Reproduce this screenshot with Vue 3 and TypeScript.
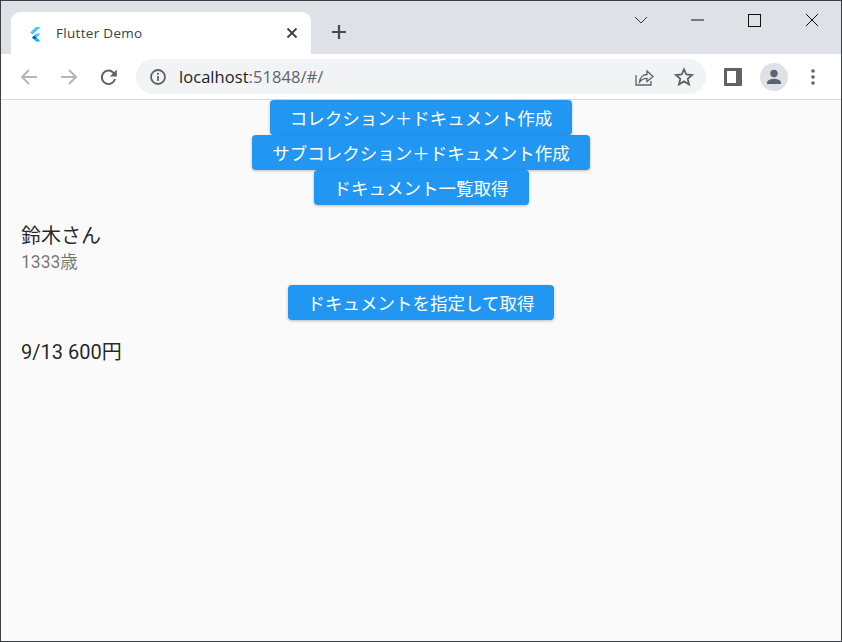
<script setup lang="ts">
const topButtons: string[] = [
  'コレクション＋ドキュメント作成',
  'サブコレクション＋ドキュメント作成',
  'ドキュメント一覧取得',
]
</script>

<template>
  <div class="window">
    <header class="tabstrip">
      <div class="tab">
        <svg class="flutter" width="13" height="16" viewBox="2 0 13 16">
          <path d="M9 1h4.600L5.500 8.600 3.200 6.400z" fill="#47c5fb" />
          <path d="M9 7.600h4.600L9.600 11.500 7.200 9.400z" fill="#47c5fb" />
          <path d="M7.200 9.400l2.400 2.100-2.300 2.200-2.300-2.200z" fill="#00569e" />
          <path d="M9.600 11.500l4 3.900H9l-1.700-1.700z" fill="#00b5f8" />
        </svg>
        <span class="tab-title">Flutter Demo</span>
        <svg class="tab-close" width="12" height="12" viewBox="0 0 12 12">
          <path d="M1.500 1.500l9 9M10.500 1.500l-9 9" stroke="#3c4043" stroke-width="1.800" />
        </svg>
      </div>
      <svg class="new-tab" width="16" height="16" viewBox="0 0 16 16">
        <path d="M8 1v14M1 8h14" stroke="#484b50" stroke-width="2.200" />
      </svg>
      <div class="win-controls">
        <svg width="14" height="8" viewBox="0 0 14 8"><path d="M1 1l6 6 6-6" fill="none" stroke="#333" /></svg>
        <svg class="ctl-min" width="13" height="2" viewBox="0 0 13 2"><path d="M0 1h13" stroke="#111" /></svg>
        <svg class="ctl-max" width="13" height="13" viewBox="0 0 13 13"><rect x="0.500" y="0.500" width="12" height="12" fill="none" stroke="#111" /></svg>
        <svg class="ctl-close" width="14" height="14" viewBox="0 0 14 14"><path d="M1 1l12 12M13 1L1 13" stroke="#111" /></svg>
      </div>
    </header>

    <nav class="toolbar">
      <svg class="nav-icon" width="20" height="20" viewBox="0 0 20 20"><path d="M18 10H3M10 3l-7 7 7 7" fill="none" stroke="#b4b6b8" stroke-width="2" /></svg>
      <svg class="nav-icon" width="20" height="20" viewBox="0 0 20 20"><path d="M2 10h15M10 3l7 7-7 7" fill="none" stroke="#b4b6b8" stroke-width="2" /></svg>
      <svg class="nav-icon" width="20" height="20" viewBox="0 0 20 20"><path d="M16 12a6.700 6.700 0 1 1-1.600-6.300L17 8" fill="none" stroke="#5f6368" stroke-width="2" /><path d="M17.800 2.500v7h-7z" fill="#5f6368" /></svg>
      <div class="omnibox">
        <svg width="16" height="16" viewBox="0 0 16 16"><circle cx="8" cy="8" r="7" fill="none" stroke="#5f6368" stroke-width="1.800" /><path d="M8 7v5" stroke="#5f6368" stroke-width="1.800" /><circle cx="8" cy="4.800" r="1.100" fill="#5f6368" /></svg>
        <div class="url"><span class="host">localhost</span>:51848/#/</div>
        <svg class="share" width="20" height="20" viewBox="0 0 20 20"><path d="M2 8v10h15v-4" fill="none" stroke="#5f6368" stroke-width="1.300" /><path d="M5.500 15c.5-5 4-7.500 7.500-7.500V4l6 5.500-6 5v-3.200c-3 0-5.500 1-7.500 3.700z" fill="none" stroke="#5f6368" stroke-width="1.300" /></svg>
        <svg class="star" width="20" height="20" viewBox="0 0 20 20"><path d="M10 2.300l2.300 5.200 5.700.5-4.300 3.800 1.300 5.600-5-3-5 3 1.300-5.600L2 8l5.700-.5z" fill="none" stroke="#5f6368" stroke-width="1.800" /></svg>
      </div>
      <svg class="panel" width="18" height="18" viewBox="0 0 18 18"><rect width="18" height="18" rx="1" fill="#5f6368" /><rect x="3" y="3" width="9" height="12" fill="#fff" /></svg>
      <div class="avatar">
        <svg width="18" height="18" viewBox="0 0 18 18"><circle cx="9" cy="5.500" r="3.700" fill="#5b6474" /><path d="M2 16v-1.500c0-2.500 4.500-3.800 7-3.800s7 1.300 7 3.800V16z" fill="#5b6474" /></svg>
      </div>
      <svg class="menu" width="4" height="16" viewBox="0 0 4 16"><circle cx="2" cy="2" r="1.800" fill="#5f6368" /><circle cx="2" cy="8" r="1.800" fill="#5f6368" /><circle cx="2" cy="14" r="1.800" fill="#5f6368" /></svg>
    </nav>

    <main class="page">
      <button v-for="label in topButtons" :key="label" class="action" type="button">{{ label }}</button>
      <div class="tile">
        <div class="tile-title">鈴木さん</div>
        <div class="tile-sub">1333歳</div>
      </div>
      <button class="action" type="button">ドキュメントを指定して取得</button>
      <div class="order">9/13 600円</div>
    </main>
  </div>
</template>

<style>
html, body { margin: 0; padding: 0; }
</style>

<style scoped>
.window {
  width: 842px;
  height: 642px;
  box-sizing: border-box;
  border: 1px solid #3c3f43;
  display: flex;
  flex-direction: column;
  overflow: hidden;
  background: #fafafa;
  font-family: Roboto, "Noto Sans CJK JP", sans-serif;
}
.tabstrip {
  height: 53px;
  flex: none;
  background: #dee1e6;
  display: flex;
  align-items: flex-start;
}
.tab {
  width: 300px;
  height: 42px;
  margin: 11px 0 0 10px;
  background: #fff;
  border-radius: 9px 9px 0 0;
  display: flex;
  align-items: center;
  padding: 0 13px 0 18px;
  box-sizing: border-box;
}
.flutter { flex: none; margin-top: 1px; }
.tab-title {
  margin-left: 14px;
  font-family: "Open Sans", Roboto, sans-serif;
  font-size: 13.500px;
  letter-spacing: 0.3px;
  color: #3c4043;
  flex: 1;
}
.tab-close { flex: none; margin: -1px 0 0 0; }
.new-tab { margin: 23px 0 0 20px; flex: none; }
.win-controls {
  margin-left: auto;
  display: flex;
  align-items: center;
  height: 38px;
  padding-right: 22px;
}
.ctl-min { margin-left: 43px; }
.ctl-max { margin-left: 44px; }
.ctl-close { margin-left: 44px; }
.toolbar {
  height: 46px;
  flex: none;
  box-sizing: border-box;
  background: #fff;
  border-bottom: 1px solid #d9dadc;
  display: flex;
  align-items: center;
  padding: 0 0 0 18px;
}
.nav-icon { flex: none; margin-right: 20px; }
.omnibox {
  width: 570px;
  height: 35px;
  margin-left: -3px;
  border-radius: 18px;
  background: #f1f3f4;
  display: flex;
  align-items: center;
  padding: 0 12px 0 14px;
  box-sizing: border-box;
}
.url {
  margin-left: 13px;
  font-size: 16.500px;
  font-family: "Open Sans", Roboto, sans-serif;
  letter-spacing: 0.05px;
  color: #5f6368;
  flex: 1;
}
.host { color: #202124; }
.star { margin-left: 20px; }
.panel { flex: none; margin-left: 18px; }
.avatar {
  width: 28px;
  height: 28px;
  margin-left: 18px;
  border-radius: 50%;
  background: #dee1e6;
  display: flex;
  align-items: center;
  justify-content: center;
  flex: none;
}
.menu { flex: none; margin-left: 23px; }
.page {
  flex: 1;
  display: flex;
  flex-direction: column;
  align-items: center;
  background: #fafafa;
}
.action {
  height: 35px;
  padding: 0 20px;
  border: 0;
  border-radius: 4px;
  background: #2196f3;
  color: #fff;
  font-family: Roboto, "Noto Sans CJK JP", sans-serif;
  font-size: 17.500px;
  font-weight: 400;
  white-space: nowrap;
  box-shadow: 0 1px 3px rgba(0, 0, 0, 0.25);
}
.tile {
  align-self: stretch;
  height: 80px;
  box-sizing: border-box;
  padding: 19px 20px 0;
}
.tile-title {
  font-size: 20px;
  line-height: 24px;
  color: rgba(0, 0, 0, 0.87);
}
.tile-sub {
  margin-top: 3px;
  font-size: 17.500px;
  line-height: 22px;
  color: rgba(0, 0, 0, 0.54);
}
.order {
  align-self: stretch;
  padding: 20px 20px 0;
  font-size: 20px;
  line-height: 24px;
  color: rgba(0, 0, 0, 0.87);
}
</style>
